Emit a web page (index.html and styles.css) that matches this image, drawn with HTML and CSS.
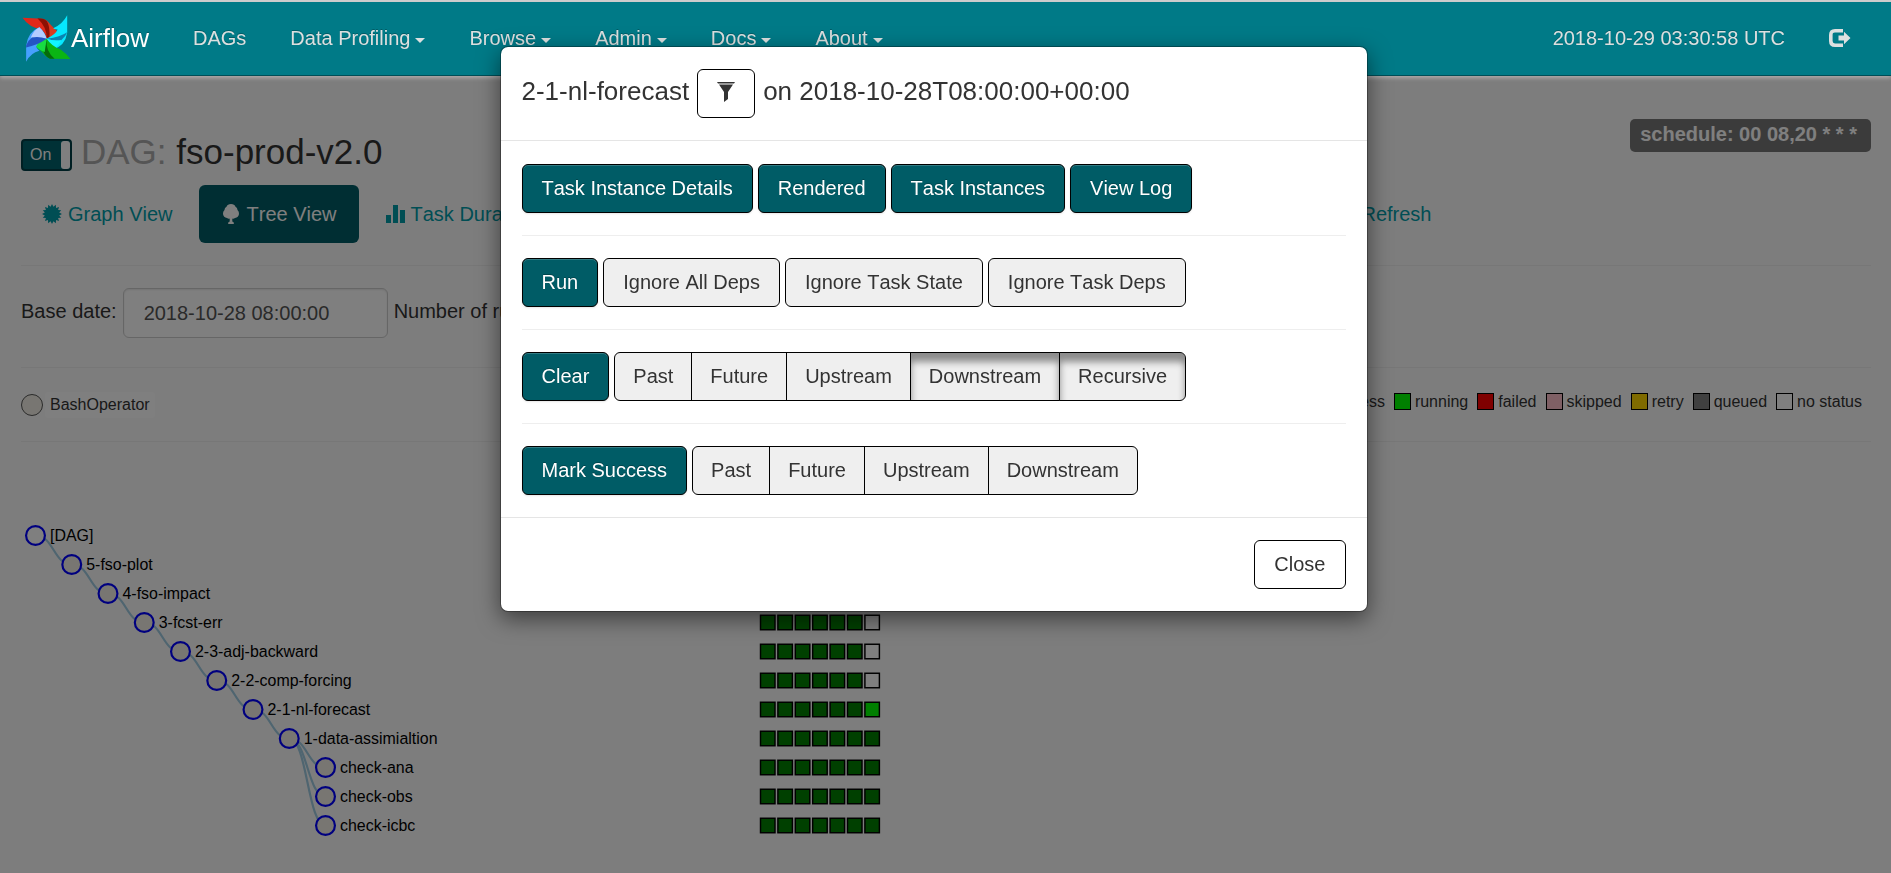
FILE: index.html
```html
<!DOCTYPE html>
<html lang="en">
<head>
<meta charset="utf-8">
<title>Airflow - DAG fso-prod-v2.0</title>
<link rel="stylesheet" href="styles.css">
</head>
<body>
<nav class="navbar">
  <a class="brand" href="#">
    <svg class="logo" viewBox="66 46 147 142" aria-hidden="true">
      <path fill="#e0281a" d="M67 54L128 57Q142 60 152 76L174 98Q160 112 140 118Q138 100 122 88Q88 84 67 54Z"/>
      <path fill="#8c1004" d="M112 56L128 57Q142 60 148 78L150 112L140 118Q142 84 112 56Z"/>
      <path fill="#d93a20" d="M142 66L174 98Q162 110 148 114Q152 90 142 66Z"/>
      <path fill="#06e8ff" d="M202 47V100Q196 140 158 151L140 118Q168 104 173 90Q160 88 160 86Q188 74 202 47Z"/>
      <path fill="#0b83b0" d="M202 98Q198 110 184 122Q160 126 140 118Q182 112 202 98Z"/>
      <path fill="#12f4ff" d="M140 118Q160 126 184 122Q172 144 158 151Z"/>
      <path fill="#0ab514" d="M140 118Q156 142 182 150Q200 162 212 179L150 178Q136 172 126 158L106 140Q122 122 140 118Z"/>
      <path fill="#066b0c" d="M140 118Q136 156 164 178L150 178Q136 172 130 156Z"/>
      <path fill="#17dd42" d="M106 140Q122 122 140 118L134 158Q118 154 106 140Z"/>
      <path fill="#46a0ff" d="M78 187V138Q84 96 118 83Q134 98 140 118Q116 124 108 142Q114 152 118 154Q92 160 78 187Z"/>
      <path fill="#b4ccff" d="M118 83Q134 98 140 118L92 114Q100 92 118 83Z"/>
      <path fill="#2455c4" d="M78 138Q84 122 96 114Q118 110 140 118Q112 138 78 144Z"/>
    </svg>
    <span class="brand-name">Airflow</span>
  </a>
  <ul class="nav-links">
    <li><a href="#">DAGs</a></li>
    <li><a href="#">Data Profiling<i class="caret"></i></a></li>
    <li><a href="#">Browse<i class="caret"></i></a></li>
    <li><a href="#">Admin<i class="caret"></i></a></li>
    <li><a href="#">Docs<i class="caret"></i></a></li>
    <li><a href="#">About<i class="caret"></i></a></li>
  </ul>
  <ul class="nav-links nav-right">
    <li><a href="#">2018-10-29 03:30:58 UTC</a></li>
    <li><a href="#" aria-label="Log out">
      <svg class="icon-logout" viewBox="0 0 22 22" aria-hidden="true">
        <path fill="none" stroke="currentColor" stroke-width="3.6" d="M14 3.8H6Q1.8 3.8 1.8 8V14Q1.8 18.2 6 18.2H14"/>
        <path fill="currentColor" d="M9.5 8.4h5.5V4.8L21.5 11 15 17.2V13.600H9.500z"/>
      </svg>
    </a></li>
  </ul>
</nav>

<main class="page">
  <header class="dag-header">
    <div class="dag-title">
      <label class="toggle"><input type="checkbox" checked><span class="toggle-text">On</span><span class="toggle-handle"></span></label>
      <h1><span class="muted">DAG:</span> fso-prod-v2.0</h1>
    </div>
    <a class="schedule" href="#">schedule: 00 08,20 * * *</a>
  </header>

  <ul class="pills">
    <li><a href="#">
      <svg class="icon" viewBox="-10 -10 20 20" aria-hidden="true"><path d="M10 0L7.160 1.420 9.240 3.830 6.070 4.060 7.070 7.070 4.060 6.070 3.830 9.240 1.420 7.160 0 10-1.420 7.160-3.830 9.240-4.060 6.070-7.070 7.070-6.070 4.060-9.240 3.830-7.160 1.420-10 0-7.160-1.420-9.240-3.830-6.070-4.060-7.070-7.070-4.060-6.070-3.830-9.240-1.420-7.160 0-10 1.420-7.160 3.830-9.240 4.060-6.070 7.070-7.070 6.070-4.060 9.240-3.830 7.160-1.420Z"/></svg>
      Graph View</a></li>
    <li><a class="active" href="#">
      <svg class="icon" viewBox="0 0 20 20" aria-hidden="true"><path d="M10 0Q13.500 0 14.500 2.800Q16.500 3.500 16.500 6Q18.200 7.500 18 10Q17.500 13.500 14 14Q12.500 15.200 11.300 14.500V17.500L12.800 18.500V20H7.200V18.500L8.700 17.500V14.500Q7.500 15.200 6 14Q2.500 13.500 2 10Q1.800 7.500 3.500 6Q3.500 3.500 5.500 2.800Q6.500 0 10 0Z"/></svg>
      Tree View</a></li>
    <li><a href="#">
      <svg class="icon" viewBox="0 0 20 20" aria-hidden="true"><path d="M1 11h5v8H1zM8 1h5v18H8zM15 6h5v13h-5z"/></svg>
      Task Duration</a></li>
    <li><a href="#">
      <svg class="icon" viewBox="0 0 20 20" aria-hidden="true"><path d="M2 2h12v2H4v12h12v-4h2v6H2z"/></svg>
      Task Tries</a></li>
    <li><a href="#">
      <svg class="icon" viewBox="0 0 20 20" aria-hidden="true"><path d="M0 14L20 4V7L2 17z"/></svg>
      Landing Times</a></li>
    <li><a href="#">
      <svg class="icon" viewBox="0 0 20 20" aria-hidden="true"><path d="M1 2h10v4H1zM5 8h10v4H5zM9 14h10v4H9z"/></svg>
      Gantt</a></li>
    <li><a href="#">
      <svg class="icon" viewBox="0 0 20 20" aria-hidden="true"><path d="M1 3h18v3H1zM1 9h18v3H1zM1 15h18v3H1z"/></svg>
      Details</a></li>
    <li><a href="#">
      <svg class="icon" viewBox="0 0 20 20" aria-hidden="true"><path d="M6 4l2 2-4 4 4 4-2 2-6-6zM14 4l6 6-6 6-2-2 4-4-4-4z"/></svg>
      Code</a></li>
    <li><a href="#">
      <svg class="icon" viewBox="0 0 20 20" aria-hidden="true"><path d="M10 2a8 8 0 1 0 8 8h-3a5 5 0 1 1-5-5v3l6-4-6-4z"/></svg>
      Refresh</a></li>
  </ul>
  <hr>

  <form class="filters">
    <label for="base-date">Base date:</label>
    <input id="base-date" type="text" value="2018-10-28 08:00:00">
    <label for="num-runs">Number of runs:</label>
    <select id="num-runs"><option>25</option></select>
  </form>
  <hr>

  <section class="legend-row">
    <div class="operator"><span class="operator-dot"></span><span class="operator-name">BashOperator</span></div>
    <ul class="legend">
      <li><i class="swatch success"></i>success</li>
      <li><i class="swatch running"></i>running</li>
      <li><i class="swatch failed"></i>failed</li>
      <li><i class="swatch skipped"></i>skipped</li>
      <li><i class="swatch retry"></i>retry</li>
      <li><i class="swatch queued"></i>queued</li>
      <li><i class="swatch"></i>no status</li>
    </ul>
  </section>
  <hr>

  <svg class="tree" width="1450" height="348" viewBox="-10 -10 1000 240">
    <defs>
      <g id="runs6">
        <rect x="500" y="-5" width="10" height="10"/><rect x="512" y="-5" width="10" height="10"/>
        <rect x="524" y="-5" width="10" height="10"/><rect x="536" y="-5" width="10" height="10"/>
        <rect x="548" y="-5" width="10" height="10"/><rect x="560" y="-5" width="10" height="10"/>
      </g>
      <rect id="last" x="572" y="-5" width="10" height="10"/>
      <path id="step" d="M0 0C12.500 0 12.500 20 25 20"/>
    </defs>
    <g class="links">
      <use href="#step"/><use href="#step" x="25" y="20"/><use href="#step" x="50" y="40"/>
      <use href="#step" x="75" y="60"/><use href="#step" x="100" y="80"/><use href="#step" x="125" y="100"/>
      <use href="#step" x="150" y="120"/><use href="#step" x="175" y="140"/>
      <path d="M175 140C187.500 140 187.500 180 200 180"/>
      <path d="M175 140C187.500 140 187.500 200 200 200"/>
    </g>
    <g class="nodes">
      <circle class="root" cx="0" cy="0" r="6.500"/><text x="10" y="4">[DAG]</text>
      <circle cx="25" cy="20" r="6.500"/><text x="35" y="24">5-fso-plot</text>
      <circle cx="50" cy="40" r="6.500"/><text x="60" y="44">4-fso-impact</text>
      <circle cx="75" cy="60" r="6.500"/><text x="85" y="64">3-fcst-err</text>
      <circle cx="100" cy="80" r="6.500"/><text x="110" y="84">2-3-adj-backward</text>
      <circle cx="125" cy="100" r="6.500"/><text x="135" y="104">2-2-comp-forcing</text>
      <circle cx="150" cy="120" r="6.500"/><text x="160" y="124">2-1-nl-forecast</text>
      <circle cx="175" cy="140" r="6.500"/><text x="185" y="144">1-data-assimialtion</text>
      <circle cx="200" cy="160" r="6.500"/><text x="210" y="164">check-ana</text>
      <circle cx="200" cy="180" r="6.500"/><text x="210" y="184">check-obs</text>
      <circle cx="200" cy="200" r="6.500"/><text x="210" y="204">check-icbc</text>
    </g>
    <g class="runs">
      <use href="#runs6" y="20"/><use href="#last" class="none" y="20"/>
      <use href="#runs6" y="40"/><use href="#last" class="none" y="40"/>
      <use href="#runs6" y="60"/><use href="#last" class="none" y="60"/>
      <use href="#runs6" y="80"/><use href="#last" class="none" y="80"/>
      <use href="#runs6" y="100"/><use href="#last" class="none" y="100"/>
      <use href="#runs6" y="120"/><use href="#last" class="active-run" y="120"/>
      <use href="#runs6" y="140"/><use href="#last" y="140"/>
      <use href="#runs6" y="160"/><use href="#last" y="160"/>
      <use href="#runs6" y="180"/><use href="#last" y="180"/>
      <use href="#runs6" y="200"/><use href="#last" y="200"/>
    </g>
  </svg>
</main>

<div class="backdrop"></div>
<div class="modal-layer">
  <div class="modal" role="dialog" aria-modal="true" aria-labelledby="modal-title">
    <div class="modal-header">
      <h2 id="modal-title">2-1-nl-forecast
        <button class="btn btn-filter" type="button" aria-label="Filter on task">
          <svg class="icon-filter" viewBox="0 0 18 20" aria-hidden="true"><path d="M0 0H18L17 1.500H1ZM2 2.500H16L11 10V17L7 20V10Z"/></svg>
        </button>
        on 2018-10-28T08:00:00+00:00</h2>
    </div>
    <div class="modal-body">
      <div class="actions">
        <button class="btn primary" type="button">Task Instance Details</button>
        <button class="btn primary" type="button">Rendered</button>
        <button class="btn primary" type="button">Task Instances</button>
        <button class="btn primary" type="button">View Log</button>
      </div>
      <hr>
      <div class="actions">
        <button class="btn primary" type="button">Run</button>
        <button class="btn option" type="button">Ignore All Deps</button>
        <button class="btn option" type="button">Ignore Task State</button>
        <button class="btn option" type="button">Ignore Task Deps</button>
      </div>
      <hr>
      <div class="actions">
        <button class="btn primary" type="button">Clear</button>
        <div class="group">
          <button class="btn option" type="button">Past</button>
          <button class="btn option" type="button">Future</button>
          <button class="btn option" type="button">Upstream</button>
          <button class="btn option pressed" type="button" aria-pressed="true">Downstream</button>
          <button class="btn option pressed" type="button" aria-pressed="true">Recursive</button>
        </div>
      </div>
      <hr>
      <div class="actions">
        <button class="btn primary" type="button">Mark Success</button>
        <div class="group">
          <button class="btn option" type="button">Past</button>
          <button class="btn option" type="button">Future</button>
          <button class="btn option" type="button">Upstream</button>
          <button class="btn option" type="button">Downstream</button>
        </div>
      </div>
    </div>
    <div class="modal-footer"><button class="btn" type="button">Close</button></div>
  </div>
</div>
</body>
</html>
```
FILE: styles.css
```css
* { box-sizing: border-box; }

body {
  margin: 0;
  min-height: 100vh;
  overflow: hidden;
  background: #fbfbfb;
  color: #333;
  font: 20px/28px "Liberation Sans", Arial, sans-serif;
  font-kerning: none;
}

ul { list-style: none; margin: 0; padding: 0; }
a { text-decoration: none; }

hr { border: 0; border-top: 1px solid #eee; margin: 22px 0; }

/* Navigation bar */
.navbar {
  position: relative;
  z-index: 2;
  display: flex;
  align-items: center;
  height: 76px;
  padding: 0 18px 0 22px;
  background: #007a87;
  border-top: 2px solid #ccc;
  border-bottom: 1px solid #004e57;
  box-shadow: 0 2px 4px rgba(255, 240, 240, 0.4);
}
.brand {
  display: flex;
  align-items: center;
  color: #fff;
  font-size: 26px;
  text-shadow: 0 -1px 0 rgba(0, 0, 0, 0.25);
  margin-right: 22px;
}
.brand-name { padding-bottom: 2px; }
.logo { width: 49px; height: 47px; }
.nav-links { display: flex; padding-bottom: 2px; }
.nav-links a {
  display: flex;
  align-items: center;
  height: 28px;
  padding: 0 22px;
  color: #dce0e0;
  text-shadow: 0 -1px 0 rgba(0, 0, 0, 0.25);
}
.nav-right { margin-left: auto; }
.caret {
  margin: 6px 0 0 5px;
  border: 5px solid transparent;
  border-top-color: currentColor;
  border-bottom: 0;
}
.icon-logout { width: 22px; height: 22px; }

/* Page content */
.page { padding: 43px 20px 0 21px; }
.dag-header {
  display: flex;
  justify-content: space-between;
  align-items: flex-start;
  height: 66px;
}
.dag-title { display: flex; align-items: center; gap: 9px; padding-top: 14px; }
h1 { margin: 0; padding-bottom: 2px; font-size: 35px; line-height: 38px; font-weight: 400; }
.muted { color: #aaa; }
.toggle {
  display: flex;
  justify-content: space-between;
  width: 51px;
  height: 32px;
  margin-top: 4px;
  border: 2px solid #003f46;
  border-radius: 4px;
  background: #00626c;
  color: #fff;
  font-size: 16px;
}
.toggle input { position: absolute; opacity: 0; }
.toggle-text { padding-left: 7px; }
.toggle-handle { width: 9px; border-radius: 3px; background: #fff; }
.schedule {
  padding: 1px 14px 4px 10px;
  border-radius: 5px;
  background: #777;
  color: #fff;
  font-weight: 700;
}

.pills { display: flex; gap: 4px; }
.pills a {
  display: flex;
  align-items: center;
  gap: 6px;
  padding: 15px 22px;
  border-radius: 6px;
  color: #009ca9;
  white-space: nowrap;
}
.pills .active { background: #005c66; color: #fff; }
.pills li:first-child { margin-left: -1px; }
.icon { width: 20px; height: 20px; fill: currentColor; }

.filters { display: flex; align-items: center; gap: 6px; margin-bottom: 29px; }
.filters label { padding-bottom: 4px; }
.filters input, .filters select {
  height: 50px;
  padding: 0 20px;
  border: 1px solid #ccc;
  border-radius: 6px;
  background: #fff;
  color: #555;
  font: inherit;
  font-kerning: none;
  box-shadow: inset 0 1px 2px rgba(0, 0, 0, 0.1);
}
.filters input { width: 265px; }

.legend-row {
  display: flex;
  justify-content: space-between;
  align-items: center;
  height: 29px;
  font-size: 16px;
}
.operator { display: flex; align-items: center; gap: 2px; }
.operator-dot {
  width: 22px;
  height: 22px;
  border: 1px solid #555;
  border-radius: 50%;
  background: #f0ede4;
}
.operator-name { padding: 0 5px; border-radius: 4px; background: #fff; line-height: 26px; }
.legend { display: flex; gap: 9px; padding: 0 9px 6px 0; }
.legend li { display: flex; align-items: center; gap: 4px; }
.swatch { width: 17px; height: 17px; border: 1px solid #000; background: #fff; }
.success { background: green; }
.running { background: lime; }
.failed { background: red; }
.skipped { background: pink; }
.retry { background: gold; }
.queued { background: gray; }

.tree { display: block; margin-top: 79px; font-size: 11px; }
.links { fill: none; stroke: #9ecae1; stroke-width: 1.5; }
.nodes circle { fill: #f0ede4; stroke: #00f; stroke-width: 1.5; }
.nodes .root { fill: #fff; }
.nodes text { fill: #000; }
.runs { fill: green; stroke: #000; stroke-width: 1; }
.none { fill: #fff; }
.active-run { fill: lime; }

/* Dialog */
.backdrop { position: fixed; inset: 0; z-index: 1; background: rgba(0, 0, 0, 0.5); }
.modal-layer {
  position: fixed;
  inset: 0;
  z-index: 3;
  display: flex;
  justify-content: center;
  align-items: flex-start;
  padding: 46px 24px 0 0;
}
.modal {
  width: 868px;
  max-width: 100%;
  border: 1px solid rgba(0, 0, 0, 0.3);
  border-radius: 8px;
  background: #fff;
  background-clip: padding-box;
  box-shadow: 0 7px 22px rgba(0, 0, 0, 0.5);
}
.modal-header { padding: 22px 21px; border-bottom: 1px solid #e5e5e5; }
.modal-header h2 {
  display: flex;
  align-items: flex-start;
  gap: 8px;
  margin: 0;
  font-size: 26px;
  line-height: 44px;
  font-weight: 400;
}
.modal-body { padding: 23px 21px 22px; }
.modal-footer {
  display: flex;
  justify-content: flex-end;
  padding: 22px 21px;
  border-top: 1px solid #e5e5e5;
}
.actions { display: flex; gap: 5px; }
.btn {
  height: 49px;
  padding: 0 19px 2px;
  border: 1px solid #000;
  border-radius: 6px;
  background: #fff;
  color: #333;
  font: inherit;
  font-size: 20px;
  font-kerning: none;
  white-space: nowrap;
}
.btn-filter { width: 58px; padding-bottom: 4px; }
.icon-filter { display: block; width: 18px; height: 20px; margin: 0 auto; fill: #333; }
.primary {
  background: #005c66;
  color: #fff;
  text-shadow: 0 -1px 0 rgba(0, 0, 0, 0.25);
  box-shadow: inset 0 1px 0 rgba(255, 255, 255, 0.2), 0 1px 2px rgba(0, 0, 0, 0.1);
}
.option { background: #efefef; }
.group { display: flex; }
.group .btn { padding: 0 18px 2px; border-radius: 0; }
.group .btn + .btn { margin-left: -1px; }
.group .btn:first-child { border-radius: 6px 0 0 6px; }
.group .btn:last-child { border-radius: 0 6px 6px 0; }
.group .pressed { box-shadow: inset 0 9px 7px #8c8c8c; }
```
